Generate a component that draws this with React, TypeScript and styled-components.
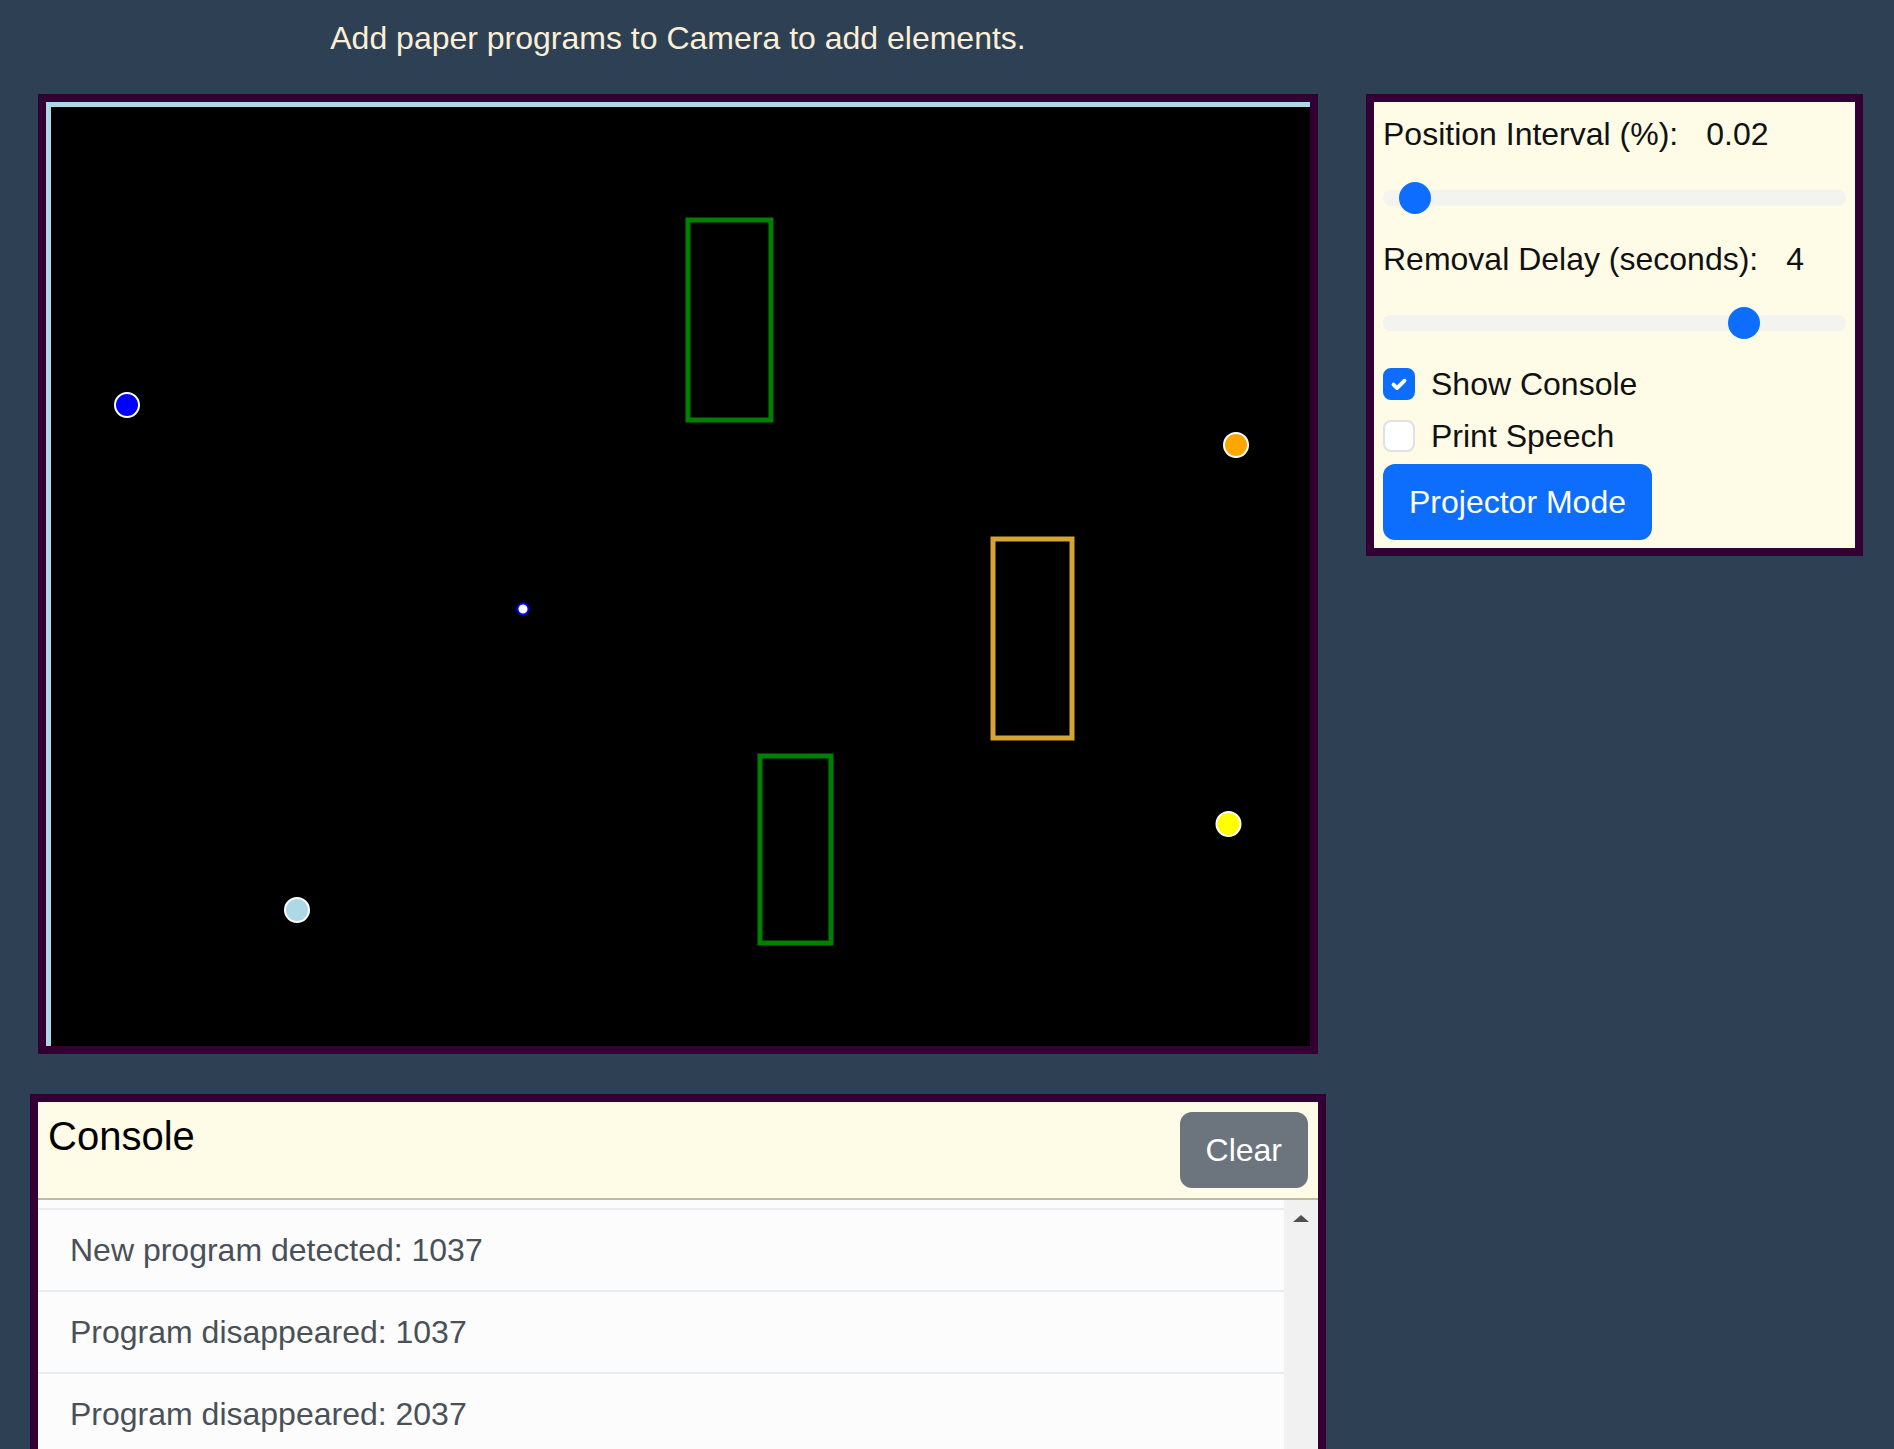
import React from "react";
import styled, { createGlobalStyle } from "styled-components";

const GlobalStyle = createGlobalStyle`
  html, body {
    margin: 0;
    padding: 0;
    background: #2e4154;
    overflow: hidden;
  }
  body {
    font-family: "Liberation Sans", Arial, Helvetica, sans-serif;
  }
  *, *::before, *::after { box-sizing: border-box; }
`;

const Page = styled.div`
  display: grid;
  grid-template-columns: 1296px 497px;
  column-gap: 40px;
  padding-left: 30px;
  align-items: start;
  height: 1449px;
  overflow: hidden;
`;

const Hint = styled.h1`
  grid-column: 1;
  grid-row: 1;
  margin: 14px 0 32px;
  font-size: 32px;
  line-height: 48px;
  font-weight: 400;
  color: #fdefd6;
  text-align: center;
`;

const CameraFrame = styled.div`
  grid-column: 1;
  grid-row: 2;
  justify-self: center;
  width: 1280px;
  height: 960px;
  border: 8px solid #330033;
`;

const Surface = styled.div`
  width: 100%;
  height: 100%;
  background: #000;
  border-top: 5px solid #add8e6;
  border-left: 5px solid #add8e6;
  svg { display: block; }
`;

const SidePanel = styled.div`
  grid-column: 2;
  grid-row: 2;
  border: 8px solid #330033;
  background: #fefbe6;
  padding: 8px 9px;
  display: flex;
  flex-direction: column;
  align-items: flex-start;
`;

const Field = styled.div`
  width: 100%;
  margin-bottom: 13px;
`;

const FieldLabel = styled.div`
  font-size: 32px;
  line-height: 48px;
  color: #111;
  margin-bottom: 16px;
  display: flex;
`;

const FieldValue = styled.span`
  margin-left: 28px;
`;

const Range = styled.input`
  -webkit-appearance: none;
  appearance: none;
  display: block;
  width: 100%;
  height: 48px;
  margin: 0;
  padding: 0;
  background: transparent;
  &::-webkit-slider-runnable-track {
    height: 16px;
    background: #f3f3f0;
    border-radius: 16px;
    border: 0;
  }
  &::-webkit-slider-thumb {
    -webkit-appearance: none;
    appearance: none;
    width: 32px;
    height: 32px;
    margin-top: -8px;
    border-radius: 50%;
    background: #0d6efd;
    border: 0;
  }
`;

const CheckRow = styled.label`
  display: flex;
  align-items: center;
  gap: 16px;
  height: 48px;
  margin-bottom: 4px;
  font-size: 32px;
  line-height: 48px;
  color: #111;
`;

const CheckBox = styled.span<{ $checked: boolean }>`
  width: 32px;
  height: 32px;
  border-radius: 8px;
  display: flex;
  align-items: center;
  justify-content: center;
  background: ${(p) => (p.$checked ? "#0d6efd" : "#fff")};
  border: 2px solid ${(p) => (p.$checked ? "#0d6efd" : "#dee2e6")};
`;

const Button = styled.button<{ $tone: "primary" | "secondary" }>`
  height: 76px;
  padding: 0 26px;
  border: 0;
  border-radius: 12px;
  font-family: "Liberation Sans", Arial, sans-serif;
  font-size: 32px;
  line-height: 76px;
  color: #fff;
  background: ${(p) => (p.$tone === "primary" ? "#0d6efd" : "#6c757d")};
  cursor: pointer;
  white-space: nowrap;
`;

const ConsoleBox = styled.section`
  grid-column: 1;
  grid-row: 3;
  margin-top: 40px;
  width: 1296px;
  border: 8px solid #330033;
`;

const ConsoleHeader = styled.header`
  display: flex;
  justify-content: space-between;
  align-items: flex-start;
  padding: 10px;
  background: #fefbe6;
  border-bottom: 2px solid #bdbaa6;
`;

const ConsoleTitle = styled.h2`
  margin: 0;
  font-size: 40px;
  line-height: 1.2;
  font-weight: 400;
  color: #000;
`;

const ConsoleBody = styled.div`
  display: flex;
  background: #fcfcfc;
`;

const LogList = styled.ul`
  flex: 1;
  list-style: none;
  margin: 0;
  padding: 8px 0 0;
`;

const LogItem = styled.li`
  border-top: 2px solid #e9ecef;
  padding: 16px 32px;
  font-size: 32px;
  line-height: 48px;
  color: #495057;
`;

const ScrollRail = styled.div`
  width: 34px;
  background: #f1f1f1;
  display: flex;
  flex-direction: column;
  align-items: center;
  padding-top: 15px;
`;

const RailArrow = styled.span`
  width: 0;
  height: 0;
  border-left: 8px solid transparent;
  border-right: 8px solid transparent;
  border-bottom: 7px solid #505050;
`;

const Dot = ({ x, y, r, fill, stroke }: { x: number; y: number; r: number; fill: string; stroke: string }) => (
  <circle cx={x} cy={y} r={r} fill={fill} stroke={stroke} strokeWidth={2} />
);

const Paper = ({ x, y, w, h, color }: { x: number; y: number; w: number; h: number; color: string }) => (
  <rect x={x} y={y} width={w} height={h} fill="none" stroke={color} strokeWidth={5} />
);

const logs = ["New program detected: 1037", "Program disappeared: 1037", "Program disappeared: 2037"];

export default function App() {
  return (
    <>
      <GlobalStyle />
      <Page>
        <Hint>Add paper programs to Camera to add elements.</Hint>
        <CameraFrame>
          <Surface>
            <svg width="1259" height="939" viewBox="0 0 1259 939">
              <Paper x={637} y={113} w={83} h={200} color="#008000" />
              <Paper x={942} y={432} w={79} h={199} color="#d4a534" />
              <Paper x={709} y={649} w={71} h={187} color="#008000" />
              <Dot x={76} y={298} r={12} fill="#0000ff" stroke="#ffffff" />
              <Dot x={1185} y={338} r={12} fill="#ffa500" stroke="#ffffff" />
              <Dot x={472} y={502} r={5.5} fill="#ffffff" stroke="#0000ff" />
              <Dot x={1177.5} y={717} r={12} fill="#ffff00" stroke="#ffffff" />
              <Dot x={246} y={803} r={12} fill="#add8e6" stroke="#ffffff" />
            </svg>
          </Surface>
        </CameraFrame>
        <SidePanel>
          <Field>
            <FieldLabel>
              Position Interval (%):<FieldValue>0.02</FieldValue>
            </FieldLabel>
            <Range type="range" min={0} max={0.54} step={0.01} defaultValue={0.02} />
          </Field>
          <Field>
            <FieldLabel>
              Removal Delay (seconds):<FieldValue>4</FieldValue>
            </FieldLabel>
            <Range type="range" min={0} max={5} step={1} defaultValue={4} />
          </Field>
          <CheckRow>
            <CheckBox $checked>
              <svg width="22" height="22" viewBox="0 0 20 20">
                <path d="M5 10.5l3.2 3.2L15 7" fill="none" stroke="#fff" strokeWidth="3.5" strokeLinecap="round" strokeLinejoin="round" />
              </svg>
            </CheckBox>
            Show Console
          </CheckRow>
          <CheckRow>
            <CheckBox $checked={false} />
            Print Speech
          </CheckRow>
          <Button $tone="primary">Projector Mode</Button>
        </SidePanel>
        <ConsoleBox>
          <ConsoleHeader>
            <ConsoleTitle>Console</ConsoleTitle>
            <Button $tone="secondary">Clear</Button>
          </ConsoleHeader>
          <ConsoleBody>
            <LogList>
              {logs.map((l, i) => (
                <LogItem key={i}>{l}</LogItem>
              ))}
            </LogList>
            <ScrollRail>
              <RailArrow />
            </ScrollRail>
          </ConsoleBody>
        </ConsoleBox>
      </Page>
    </>
  );
}
